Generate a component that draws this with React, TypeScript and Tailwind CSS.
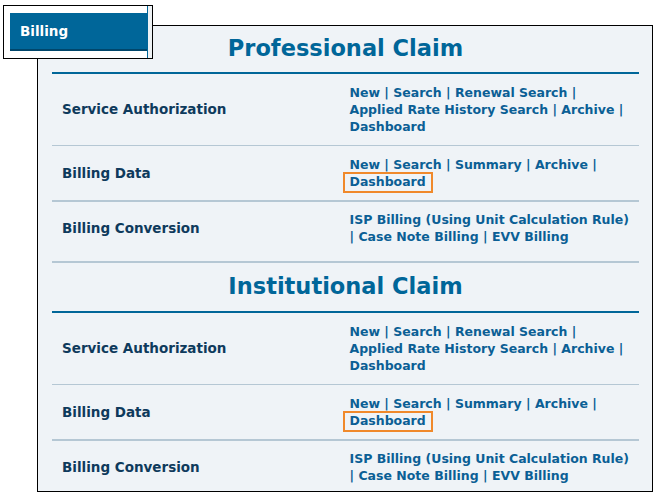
import React from "react";

const FONT = "font-['DejaVu_Sans',sans-serif]";

function Highlight({ children }: { children: React.ReactNode }) {
  return (
    <span className="relative inline-block leading-[17px]">
      {children}
      <span className="absolute -left-[7px] -right-[7px] -top-[1px] -bottom-[3px] border-2 border-[#f0892b]" />
    </span>
  );
}

function Row({
  label,
  children,
  pad,
  sep,
}: {
  label: string;
  children: React.ReactNode;
  pad: string;
  sep: string;
}) {
  return (
    <>
      <div className={`grid grid-cols-2 items-center ${pad}`}>
        <div className="pl-[10px] text-[13.5px] text-[#0e3a5c]">{label}</div>
        <div className="pl-[4px] text-[12.5px] text-[#0b5f95]">{children}</div>
      </div>
      <div className={`${sep} bg-[#b5c7d4]`} />
    </>
  );
}

function Section({ title, headH }: { title: string; headH: string }) {
  return (
    <div>
      <div className={`${headH} flex items-center justify-center text-[22.5px] font-bold text-[#006699]`}>
        {title}
      </div>
      <div className="h-[2px] bg-[#006699]" />
      <Row label="Service Authorization" pad="pt-[10px] pb-[10px]" sep="h-px">
        New | Search | Renewal Search |<br />
        Applied Rate History Search | Archive |<br />
        Dashboard
      </Row>
      <Row label="Billing Data" pad="pt-[10px] pb-[10px]" sep="h-[2px]">
        New | Search | Summary | Archive |<br />
        <Highlight>Dashboard</Highlight>
      </Row>
      <Row label="Billing Conversion" pad="pt-[9px] pb-[16px]" sep="h-[2px]">
        <span className="whitespace-nowrap">ISP Billing (Using Unit Calculation Rule)</span>
        <br />| Case Note Billing | EVV Billing
      </Row>
    </div>
  );
}

export default function App() {
  return (
    <div className={`relative w-[658px] h-[496px] overflow-hidden bg-white ${FONT} text-[13px] leading-[17px] font-bold`}>
      <div className="ml-[37px] mt-[25px] w-[616px] h-[467px] overflow-hidden border border-black bg-[#eff3f7] pl-[14px] pr-[13px]">
        <Section title="Professional Claim" headH="h-[46px] pb-[2px]" />
        <Section title="Institutional Claim" headH="h-[48px] pb-[2px]" />
      </div>
      <div className="absolute left-[3px] top-[5px] flex h-[54px] w-[150px] border border-black bg-white">
        <div className="pl-[6px] py-[7px]">
          <div className="flex h-[38px] w-[137px] items-center border-b-2 border-[#00466b] bg-[#006699] pl-[10px] pt-[1px] text-[13.5px] text-white">
            Billing
          </div>
        </div>
        <div className="w-px bg-[#006699]" />
        <div className="flex-1 bg-[#eef2f5]" />
      </div>
    </div>
  );
}
